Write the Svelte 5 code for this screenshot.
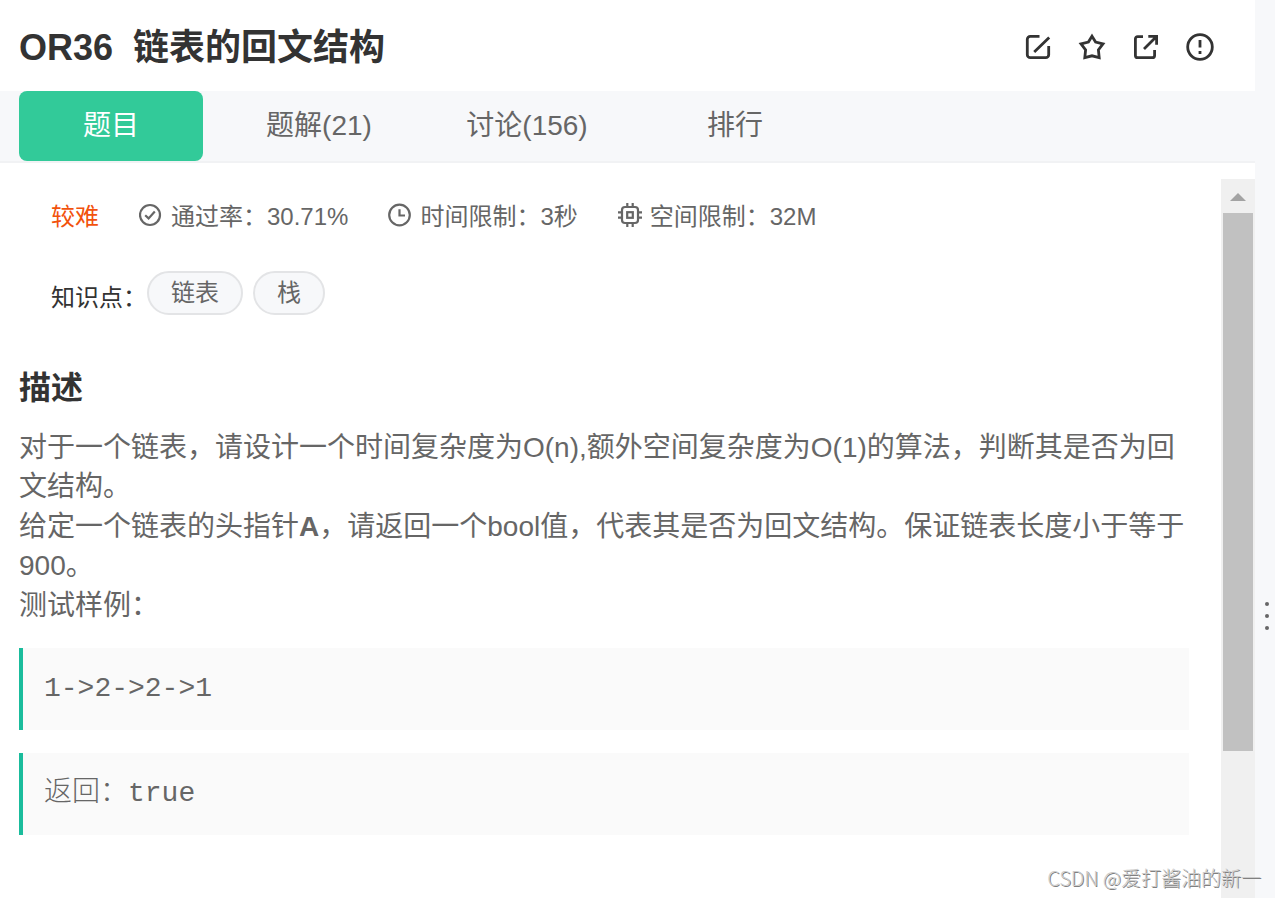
<script>
  let active = $state(0);
  const tabs = ['题目', '题解(21)', '讨论(156)', '排行'];
  const tags = ['链表', '栈'];
</script>

<div class="page">
  <main class="panel">
    <header class="head">
      <h1><span>OR36</span><span>链表的回文结构</span></h1>
      <div class="actions">
        <button type="button" aria-label="笔记">
          <svg viewBox="0 0 28 28"><path d="M15.5 3.3H6.3a3 3 0 0 0-3 3v15.4a3 3 0 0 0 3 3h15.4a3 3 0 0 0 3-3V13M25.2 4.4 10.2 19" /></svg>
        </button>
        <button type="button" aria-label="收藏">
          <svg viewBox="0 0 28 28"><path d="M14 3.2 17.6 9 25 10.8 20.4 16.8 21.2 24.6 14 22.8 6.8 24.6 7.6 16.8 3 10.8 10.4 9Z" /></svg>
        </button>
        <button type="button" aria-label="分享">
          <svg viewBox="0 0 28 28"><path d="M11 3.6H5.6a2.2 2.2 0 0 0-2.2 2.2v16.6a2.2 2.2 0 0 0 2.2 2.2h14.8a2.2 2.2 0 0 0 2.2-2.2V17M12 16 24 4M16.3 3.4H24.6V11.8" /></svg>
        </button>
        <button type="button" aria-label="反馈">
          <svg viewBox="0 0 28 28"><circle cx="14" cy="14" r="12.3" /><path d="M14 7v7.6M14 18v3" /></svg>
        </button>
      </div>
    </header>

    <div class="tabs" role="tablist">
      {#each tabs as tab, i}
        <button type="button" role="tab" aria-selected={active === i} class:active={active === i} onclick={() => (active = i)}>{tab}</button>
      {/each}
    </div>

    <div class="body">
      <article>
        <div class="meta">
          <span class="level">较难</span>
          <span class="item">
            <svg viewBox="0 0 24 24"><circle cx="11" cy="12" r="10" /><path d="M6.2 12.2 9.6 15.4 15.8 8.6" /></svg>
            通过率：30.71%
          </span>
          <span class="item">
            <svg viewBox="0 0 24 24"><circle cx="11.5" cy="12" r="10.3" /><path d="M11.5 6.2V12.5H17" /></svg>
            时间限制：3秒
          </span>
          <span class="item">
            <svg viewBox="0 0 24 24"><rect x="4" y="4" width="16" height="16" rx="3" /><rect x="9.2" y="9.2" width="5.6" height="5.6" /><path d="M9.3 0v4M14.7 0v4M9.3 20v4M14.7 20v4M0 9.3h4M0 14.7h4M20 9.3h4M20 14.7h4" /></svg>
            空间限制：32M
          </span>
        </div>

        <div class="topics">
          <span class="label">知识点：</span>
          <div class="tags">
            {#each tags as tag}<a href="#tag">{tag}</a>{/each}
          </div>
        </div>

        <h2>描述</h2>
        <p>对于一个链表，请设计一个时间复杂度为O(n),额外空间复杂度为O(1)的算法，判断其是否为回文结构。</p>
        <p>给定一个链表的头指针<b>A</b>，请返回一个bool值，代表其是否为回文结构。保证链表长度小于等于900。</p>
        <p>测试样例：</p>
        <pre>1-&gt;2-&gt;2-&gt;1</pre>
        <pre>返回：true</pre>
      </article>

      <div class="scroll" aria-hidden="true">
        <svg class="up" viewBox="0 0 34 34"><path d="M9 22 17 14 25 22Z" /></svg>
        <div class="thumb"></div>
        <div class="rest"></div>
      </div>
    </div>
  </main>

  <div class="gutter" aria-hidden="true">
    <div class="dots"><i></i><i></i><i></i></div>
  </div>
  <div class="mark">CSDN @爱打酱油的新一</div>
</div>

<style>
  :global(body) {
    margin: 0;
    background: #fff;
  }
  .page {
    position: relative;
    display: flex;
    min-height: 100vh;
    overflow: hidden;
    font-family: 'Liberation Sans', 'Noto Sans CJK SC', sans-serif;
    color: #666;
  }
  .page * {
    box-sizing: border-box;
  }
  .panel {
    flex: 1;
    min-width: 0;
    display: flex;
    flex-direction: column;
  }
  button {
    border: 0;
    padding: 0;
    background: none;
    font: inherit;
    color: inherit;
    cursor: pointer;
  }
  svg {
    display: block;
    fill: none;
    stroke: currentColor;
  }
  .head {
    display: flex;
    align-items: center;
    justify-content: space-between;
    padding: 22px 41px 19px 19px;
    color: #333;
  }
  h1 {
    display: flex;
    gap: 20px;
    margin: 0;
    padding-top: 2px;
    font-size: 36px;
    line-height: 48px;
  }
  .actions {
    display: flex;
    gap: 26px;
  }
  .actions svg {
    width: 28px;
    height: 28px;
    stroke-width: 2.8;
  }
  .tabs {
    display: flex;
    gap: 24px;
    padding-left: 19px;
    background: #f7f8fa;
    border-bottom: 2px solid #f1f2f4;
  }
  .tabs button {
    width: 184px;
    height: 70px;
    border-radius: 8px;
    font-size: 28px;
    line-height: 40px;
  }
  .tabs .active {
    background: #32ca99;
    color: #fff;
  }
  .body {
    flex: 1;
    display: flex;
    gap: 32px;
    padding-top: 16px;
  }
  article {
    flex: 1;
    min-width: 0;
    padding: 20px 0 40px 19px;
  }
  .meta {
    display: flex;
    gap: 40px;
    padding-left: 32px;
    font-size: 24px;
    line-height: 36px;
  }
  .level {
    color: #f2520c;
  }
  .item {
    display: flex;
    gap: 8px;
  }
  .item svg {
    width: 24px;
    height: 24px;
    margin-top: 4px;
    stroke-width: 2.2;
  }
  .topics {
    display: flex;
    align-items: flex-start;
    padding: 36px 0 0 32px;
    font-size: 24px;
    line-height: 40px;
  }
  .label {
    padding-top: 7px;
    color: #333;
  }
  .tags {
    display: flex;
    gap: 10px;
  }
  .tags a {
    padding: 0 22px;
    border: 2px solid #e3e4e6;
    border-radius: 22px;
    background: #f7f8fa;
    color: #666;
    text-decoration: none;
  }
  h2 {
    margin: 46px 0 16px;
    font-size: 32px;
    line-height: 48px;
    color: #333;
  }
  p {
    margin: 0 0 1px;
    font-size: 28px;
    line-height: 39px;
  }
  pre {
    margin: 23px 0 0;
    padding: 21px;
    border-left: 4px solid #1abc9c;
    background: #fafafa;
    font-family: 'Liberation Mono', 'Noto Sans CJK SC', monospace;
    font-size: 28px;
    font-weight: 300;
    line-height: 40px;
    white-space: pre-wrap;
  }
  .scroll {
    display: flex;
    flex-direction: column;
    width: 34px;
    padding: 0 2px;
    background: #f0f0f0;
  }
  .up {
    width: 34px;
    height: 34px;
    margin-left: -2px;
    fill: #a3a3a3;
    stroke: none;
  }
  .thumb {
    flex: 538;
    background: #c1c1c1;
  }
  .rest {
    flex: 147;
  }
  .gutter {
    display: flex;
    flex-direction: column;
    align-items: center;
    width: 20px;
    padding-left: 4px;
    background: #f7f8fa;
  }
  .gutter::before {
    content: '';
    flex: 602;
  }
  .gutter::after {
    content: '';
    flex: 268;
  }
  .dots {
    display: grid;
    gap: 8px;
  }
  .dots i {
    width: 4px;
    height: 4px;
    border-radius: 50%;
    background: #666;
  }
  .mark {
    position: absolute;
    right: 14px;
    bottom: 6px;
    font-family: 'Noto Sans CJK SC', sans-serif;
    font-size: 20px;
    font-weight: 300;
    line-height: 28px;
    color: #ccc;
    text-shadow: 1px 1px 0 #808080;
  }
</style>
